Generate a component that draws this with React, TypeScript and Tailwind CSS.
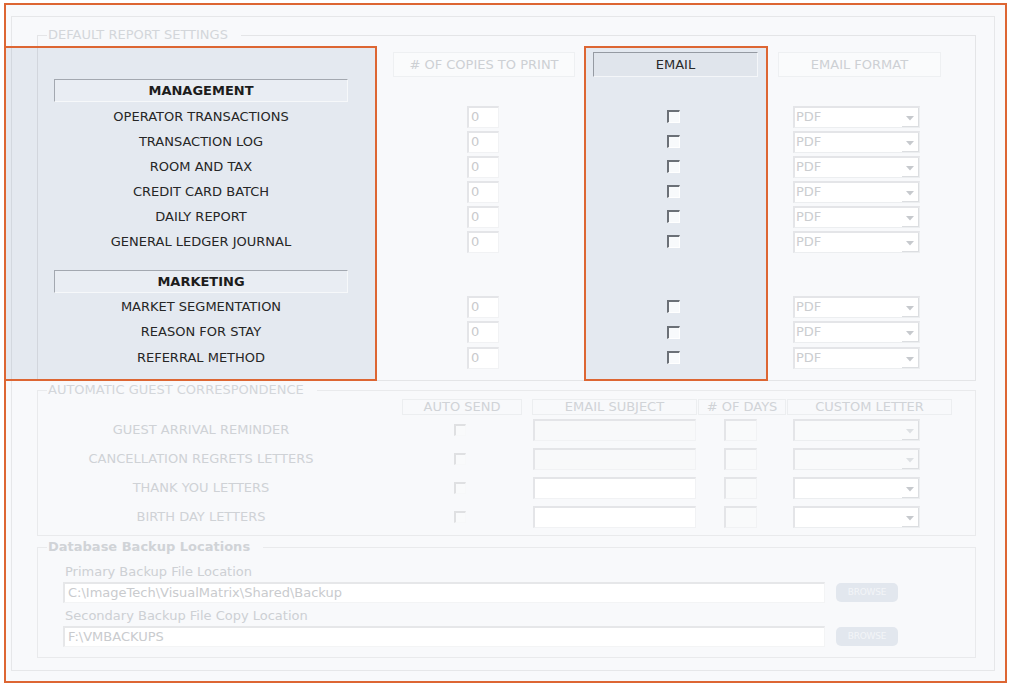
import React from "react";

const NumInput = () => (
  <div className="w-[32px] h-[22px] bg-white border-t-2 border-l-2 border-r border-b border-t-[#e4e5e8] border-l-[#e4e5e8] border-r-[#f1f2f4] border-b-[#f1f2f4] text-[13px] leading-[18px] text-[#c9cacd] pl-[2px]">
    0
  </div>
);

const DarkCheck = () => (
  <div className="w-[13px] h-[13px] bg-[#f8fafc] border-t-2 border-l-2 border-r border-b border-t-[#6b7077] border-l-[#6b7077] border-r-[#ffffff] border-b-[#ffffff]" />
);

const LightCheck = () => (
  <div className="w-[12px] h-[12px] bg-[#f9fafb] border-t-2 border-l-2 border-r border-b border-t-[#dfe0e2] border-l-[#dfe0e2] border-r-[#f7f8f9] border-b-[#f7f8f9]" />
);

const Arrow = ({ light }: { light?: boolean }) => (
  <svg width="8" height="5" viewBox="0 0 8 5" className="mt-[3px]">
    <path d="M0 0 L8 0 L4 4.5 Z" fill={light ? "#dde0e3" : "#c6c9cd"} />
  </svg>
);

const Dropdown = ({ text, light, white = true }: { text?: string; light?: boolean; white?: boolean }) => (
  <div
    className={
      "w-[127px] h-[22px] flex border-t-2 border-l-2 border-r border-b border-t-[#e4e5e8] border-l-[#e4e5e8] border-r-[#eceef0] border-b-[#eceef0] " +
      (white ? "bg-white" : "bg-[#f9fafb]")
    }
  >
    <span className="flex-1 pl-[1px] text-[13px] leading-[18px] text-[#cbcdd0]">{text}</span>
    <span className="w-[17px] flex items-center justify-center border-r border-b border-r-[#dcdee1] border-b-[#dcdee1]">
      <Arrow light={light} />
    </span>
  </div>
);

const ReportRow = ({ label, h }: { label: string; h: string }) => (
  <div className={"flex items-center " + h}>
    <div className="w-[294px] text-center text-[13px] leading-[16px] text-[#262626]">{label}</div>
    <div className="ml-[45px] w-[182px] flex justify-center pr-[2px]">
      <NumInput />
    </div>
    <div className="ml-[18px] w-[165px] flex justify-center pr-[4px]">
      <DarkCheck />
    </div>
    <div className="ml-[20px] w-[163px] pl-[15px]">
      <Dropdown text="PDF" />
    </div>
  </div>
);

const SectionHeader = ({ label }: { label: string }) => (
  <div className="w-[294px] h-[23px] flex items-center justify-center bg-[#e9edf3] border-t border-l border-r border-b border-t-[#a3a8b0] border-l-[#a3a8b0] border-r-[#f6f8fa] border-b-[#f6f8fa] text-[13px] font-bold text-[#1c1c1c]">
    {label}
  </div>
);

const GuestRow = ({ label, white }: { label: string; white: boolean }) => (
  <div className="flex items-center h-[29px]">
    <div className="w-[294px] text-center text-[13px] leading-[16px] text-[#cfd2d6]">{label}</div>
    <div className="ml-[54px] w-[120px] flex justify-center pr-[4px]">
      <LightCheck />
    </div>
    <div className="ml-[10px] w-[165px] flex justify-center">
      <div
        className={
          "w-[163px] h-[22px] border-t-2 border-l-2 border-r border-b border-t-[#e4e5e8] border-l-[#e4e5e8] border-r-[#f1f2f4] border-b-[#f1f2f4] " +
          (white ? "bg-white" : "bg-[#f8f9fa]")
        }
      />
    </div>
    <div className="ml-[1px] w-[88px] flex justify-center pr-[4px]">
      <div className="w-[33px] h-[22px] bg-[#f9fafb] border-t-2 border-l-2 border-r border-b border-t-[#e4e5e8] border-l-[#e4e5e8] border-r-[#f1f2f4] border-b-[#f1f2f4]" />
    </div>
    <div className="ml-[1px] w-[165px] pl-[6px]">
      <Dropdown light={!white} white={white} />
    </div>
  </div>
);

const GuestHead = ({ label, w, ml }: { label: string; w: string; ml: string }) => (
  <div
    className={
      "h-[16px] flex items-center justify-center border border-[#eceef0] text-[13px] leading-[14px] text-[#d0d3d7] " + w + " " + ml
    }
  >
    {label}
  </div>
);

const PathField = ({ value }: { value: string }) => (
  <div className="flex items-center">
    <div className="w-[762px] h-[21px] bg-white border-t-2 border-l-2 border-r border-b border-t-[#e6e7e9] border-l-[#e6e7e9] border-r-[#f3f4f5] border-b-[#f3f4f5] text-[13px] leading-[17px] text-[#c9cbce] pl-[3px]">
      {value}
    </div>
    <div className="ml-[11px] w-[62px] h-[19px] rounded-[5px] bg-[#e2e7ee] flex items-center justify-center text-[9px] text-[#f3f5f8] tracking-tight">
      BROWSE
    </div>
  </div>
);

export default function App() {
  const mgmt = [
    "OPERATOR TRANSACTIONS",
    "TRANSACTION LOG",
    "ROOM AND TAX",
    "CREDIT CARD BATCH",
    "DAILY REPORT",
    "GENERAL LEDGER JOURNAL",
  ];
  return (
    <div className="w-[1010px] h-[687px] bg-white pt-[3px] pl-[4px] font-['DejaVu_Sans',sans-serif]">
      <div className="relative w-[1003px] h-[680px] border-2 border-[#dd6633] bg-[#f8f9fb]">
        {/* highlight fills */}
        <div className="absolute left-[-2px] top-[41px] w-[373px] h-[335px] bg-[#e4e9f0] z-0" />
        <div className="absolute left-[578px] top-[41px] w-[184px] h-[335px] bg-[#e4e9f0] z-0" />

        <div className="relative z-10 ml-[5px] mt-[11px] w-[984px] h-[655px] border border-[rgba(0,0,0,0.07)]">
          {/* DEFAULT REPORT SETTINGS */}
          <fieldset className="ml-[25px] mt-[10px] w-[939px] border border-[rgba(0,0,0,0.08)]">
            <legend className="ml-[9px] pl-[1px] pr-[13px] text-[13px] leading-[16px] text-[#d3d6da]">
              DEFAULT REPORT SETTINGS
            </legend>
            <div className="pl-[16px] pt-[9px] pb-[10px]">
              <div className="flex h-[25px]">
                <div className="w-[294px]" />
                <div className="ml-[45px] w-[182px] h-full flex items-center justify-center border border-[#eef0f2] bg-[#fafbfc] text-[13px] text-[#cdd0d4]">
                  # OF COPIES TO PRINT
                </div>
                <div className="ml-[18px] w-[165px] h-full flex items-center justify-center bg-[#e0e5ec] border-t border-l border-r border-b border-t-[#959aa2] border-l-[#959aa2] border-r-[#f4f6f9] border-b-[#f4f6f9] text-[13px] text-[#2a2a2a]">
                  EMAIL
                </div>
                <div className="ml-[20px] w-[163px] h-full flex items-center justify-center border border-[#eef0f2] bg-[#fafbfc] text-[13px] text-[#cdd0d4]">
                  EMAIL FORMAT
                </div>
              </div>
              <div className="mt-[2px]">
                <SectionHeader label="MANAGEMENT" />
              </div>
              <div className="mt-[2px]">
                {mgmt.map((m) => (
                  <ReportRow key={m} label={m} h="h-[25px]" />
                ))}
              </div>
              <div className="mt-[16px]">
                <SectionHeader label="MARKETING" />
              </div>
              <div className="mt-[1px]">
                <ReportRow label="MARKET SEGMENTATION" h="h-[25px]" />
                <ReportRow label="REASON FOR STAY" h="h-[26px]" />
                <ReportRow label="REFERRAL METHOD" h="h-[25px]" />
              </div>
            </div>
          </fieldset>

          {/* AUTOMATIC GUEST CORRESPONDENCE */}
          <fieldset className="ml-[25px] mt-[1px] w-[939px] border border-[rgba(0,0,0,0.06)]">
            <legend className="ml-[9px] pl-[1px] pr-[13px] text-[13px] leading-[16px] text-[#d3d6da]">
              AUTOMATIC GUEST CORRESPONDENCE
            </legend>
            <div className="pl-[16px] pt-[1px] pb-[4px]">
              <div className="flex">
                <div className="w-[294px]" />
                <GuestHead label="AUTO SEND" w="w-[120px]" ml="ml-[54px]" />
                <GuestHead label="EMAIL SUBJECT" w="w-[165px]" ml="ml-[10px]" />
                <GuestHead label="# OF DAYS" w="w-[88px]" ml="ml-[1px]" />
                <GuestHead label="CUSTOM LETTER" w="w-[165px]" ml="ml-[1px]" />
              </div>
              <GuestRow label="GUEST ARRIVAL REMINDER" white={false} />
              <GuestRow label="CANCELLATION REGRETS LETTERS" white={false} />
              <GuestRow label="THANK YOU LETTERS" white={true} />
              <GuestRow label="BIRTH DAY LETTERS" white={true} />
            </div>
          </fieldset>

          {/* Database Backup Locations */}
          <fieldset className="ml-[25px] mt-[3px] w-[939px] border border-[rgba(0,0,0,0.06)]">
            <legend className="ml-[9px] pl-[1px] pr-[13px] text-[13px] leading-[16px] font-bold text-[#d0d3d7]">
              Database Backup Locations
            </legend>
            <div className="pl-[25px] pt-[9px] pb-[10px]">
              <div className="pl-[2px] text-[13px] leading-[16px] text-[#cdd0d4]">Primary Backup File Location</div>
              <div className="mt-[2px]">
                <PathField value="C:\ImageTech\VisualMatrix\Shared\Backup" />
              </div>
              <div className="mt-[5px] pl-[2px] text-[13px] leading-[16px] text-[#cdd0d4]">
                Secondary Backup File Copy Location
              </div>
              <div className="mt-[2px]">
                <PathField value="F:\VMBACKUPS" />
              </div>
            </div>
          </fieldset>
        </div>

        {/* highlight borders */}
        <div className="absolute left-[-2px] top-[41px] w-[373px] h-[335px] border-2 border-[#dd6633] z-20 pointer-events-none" />
        <div className="absolute left-[578px] top-[41px] w-[184px] h-[335px] border-2 border-[#dd6633] z-20 pointer-events-none" />
      </div>
    </div>
  );
}
